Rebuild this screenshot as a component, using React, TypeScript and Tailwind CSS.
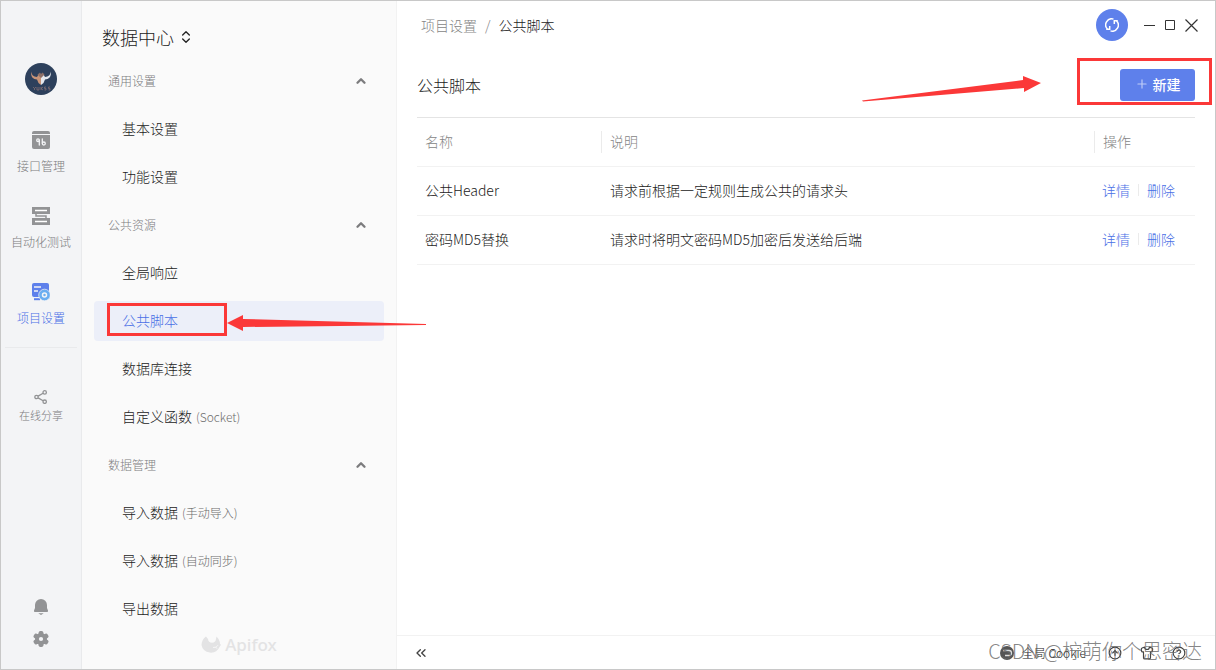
import { ChevronUp, ChevronsLeft, ChevronsUpDown, CircleHelp, CircleArrowUp, Plus, Shirt } from 'lucide-react';
import type { ReactNode } from 'react';

interface MenuItem {
  name: string;
  note?: string;
}

interface MenuGroup {
  title: string;
  items: MenuItem[];
}

const menuGroups: MenuGroup[] = [
  {
    title: '通用设置',
    items: [{ name: '基本设置' }, { name: '功能设置' }],
  },
  {
    title: '公共资源',
    items: [
      { name: '全局响应' },
      { name: '公共脚本' },
      { name: '数据库连接' },
      { name: '自定义函数', note: '(Socket)' },
    ],
  },
  {
    title: '数据管理',
    items: [
      { name: '导入数据', note: '(手动导入)' },
      { name: '导入数据', note: '(自动同步)' },
      { name: '导出数据' },
    ],
  },
];

const scripts = [
  { name: '公共Header', description: '请求前根据一定规则生成公共的请求头' },
  { name: '密码MD5替换', description: '请求时将明文密码MD5加密后发送给后端' },
];

function Avatar() {
  return (
    <svg className="w-8 h-8" viewBox="0 0 32 32">
      <circle cx="16" cy="16" r="16" fill="#2d405c" />
      <path d="M6.500 8.500c0 3.500 2 5.200 5.500 5.500l1.500-2.500 2.500 2.500v8l-2.500-2-1.500-3.500C8.500 16.500 5 13.500 6.500 8.500Z" fill="#c89478" />
      <path d="M25.500 8.500c0 3.500-2 5.200-5.500 5.500l-1.500-2.500L16 14v8l2.500-2 1.500-3.500c3.500 0 7-3 5.500-8Z" fill="#e4e8ee" />
      <path d="M12.500 11.500 15 9.500l1 1.500 1.500-1.500 2 2-3.500 3.500Z" fill="#8b6f68" />
      <path d="M8 24l1.500 1.500V27m0-1.500L11 24m1 0v3h2v-3m2 0v3m2-3-2 1.500 2 1.500m3-3h-1.500v1.500H21V27h-1.500M25 24h-1.500v1.500H25V27h-1.500" fill="none" stroke="#8d7474" strokeWidth=".7" />
    </svg>
  );
}

function ApiIcon() {
  return (
    <svg className="w-[18px] h-[18px]" viewBox="0 0 18 18">
      <path d="M2 0h14a2 2 0 0 1 2 2v1H0V2a2 2 0 0 1 2-2Z" fill="#929395" />
      <path d="M0 4h18v12a2 2 0 0 1-2 2H2a2 2 0 0 1-2-2Z" fill="#929395" />
      <g fill="none" stroke="#f3f4f6" strokeWidth="1.300" strokeLinecap="round">
        <circle cx="6" cy="9.200" r="1.300" />
        <path d="M7.300 9.200V14M10.300 8v4" />
        <circle cx="11.800" cy="12.500" r="1.500" />
      </g>
    </svg>
  );
}

function TestIcon() {
  return (
    <svg className="w-[18px] h-[18px]" viewBox="0 0 18 18">
      <path d="M0 0h18v7H0ZM0 11h18v7H0Z" fill="#929395" />
      <path d="M3 3.500h12M3 14.500h12" stroke="#fff" strokeWidth="1.300" />
      <path d="M4 7v2h10v2" fill="none" stroke="#929395" strokeWidth="1.500" />
    </svg>
  );
}

function SettingIcon() {
  return (
    <svg className="w-[18px] h-[18px]" viewBox="0 0 18 18">
      <rect width="17" height="14" rx="2" fill="#5e80eb" />
      <path d="M2 4h7M2 8h4" stroke="#f3f4f6" strokeWidth="1.300" />
      <path d="M2 16.200h6" stroke="#5e80eb" strokeWidth="2" />
      <circle cx="12.500" cy="12" r="5.800" fill="#6aaef0" stroke="#f3f4f6" strokeWidth=".7" />
      <circle cx="12.500" cy="12" r="2" fill="none" stroke="#f3f4f6" strokeWidth="1.500" />
    </svg>
  );
}

function ShareIcon() {
  return (
    <svg className="w-[14px] h-[14px]" viewBox="0 0 14 14" fill="none" stroke="#929395" strokeWidth="1.300">
      <circle cx="2.500" cy="7" r="1.700" />
      <circle cx="10.700" cy="2.400" r="1.700" />
      <circle cx="10.700" cy="11.700" r="1.700" />
      <path d="m4.100 6.100 5-2.800M4.100 7.900l5 2.900" />
    </svg>
  );
}

function BellIcon() {
  return (
    <svg className="w-4 h-4" viewBox="0 0 16 16" fill="#929395">
      <path d="M8 0a6 6 0 0 1 6 6v3l.9 2.200c.4 1-.1 1.800-1 1.800H2.100c-.9 0-1.400-.8-1-1.800L2 9V6a6 6 0 0 1 6-6ZM5.300 14.200h5.400L8 16Z" />
    </svg>
  );
}

function GearIcon() {
  return (
    <svg className="w-4 h-4" viewBox="0 0 16 16">
      <g fill="#929395">
        <circle cx="8" cy="8" r="6" />
        <rect x="5.600" y="0" width="4.800" height="16" rx="1.800" />
        <rect x="5.600" y="0" width="4.800" height="16" rx="1.800" transform="rotate(60 8 8)" />
        <rect x="5.600" y="0" width="4.800" height="16" rx="1.800" transform="rotate(120 8 8)" />
      </g>
      <circle cx="8" cy="8" r="2.100" fill="#f3f4f6" />
    </svg>
  );
}

function SyncIcon() {
  return (
    <svg className="w-[14px] h-[14px]" viewBox="0 0 14 14" fill="none" stroke="white" strokeWidth="1.500">
      <path d="M8.500 1.100A6 6 0 0 0 2.600 11.200M1.200 11.300h3.500V8" />
      <path d="M5.500 12.900A6 6 0 0 0 11.400 2.800M12.800 2.700H9.300V6" />
    </svg>
  );
}

function FoxLogo() {
  return (
    <svg className="w-5 h-5" viewBox="0 0 20 20">
      <path d="M5 1.500 7 4c.3 2.500 1.700 3.800 4 3.800S14.700 6.500 15 4l.5-2.500 2 2.500c.8 1.500 1.500 3 1.500 5l1 .8-1.500 2.200A9.500 9.500 0 0 1 .5 10C.5 6.500 2.500 3 5 1.500Z" fill="#e3e3e4" />
      <path d="m12 12.500 3-.3 2-2m-2 2 1 1.500" fill="none" stroke="#fafafa" strokeWidth=".8" />
    </svg>
  );
}

interface RailItemProps {
  label: string;
  active?: boolean;
  children: ReactNode;
}

function RailItem({ label, active, children }: RailItemProps) {
  return (
    <button className="h-[76px] w-full flex flex-col items-center gap-2 pt-2">
      {children}
      <span className={`text-[12px] leading-[18px] ${active ? 'text-[#4a6fe6]' : 'text-[#7c7c7e]'}`}>{label}</span>
    </button>
  );
}

function Rail() {
  return (
    <nav className="w-[81px] shrink-0 bg-[#f3f4f6] border-r border-[#e9eaec] flex flex-col items-center pt-[62px] pb-[22px]">
      <button aria-label="用户">
        <Avatar />
      </button>
      <div className="w-full pt-7">
        <RailItem label="接口管理">
          <ApiIcon />
        </RailItem>
        <RailItem label="自动化测试">
          <TestIcon />
        </RailItem>
        <RailItem label="项目设置" active>
          <SettingIcon />
        </RailItem>
      </div>
      <div className="w-[72px] h-px bg-[#e9eaec] -mt-1" />
      <button className="flex flex-col items-center mt-[42px]">
        <ShareIcon />
        <span className="text-[11px] leading-[22px] text-[#7c7c7e]">在线分享</span>
      </button>
      <div className="mt-auto flex flex-col gap-4">
        <button aria-label="通知">
          <BellIcon />
        </button>
        <button aria-label="设置">
          <GearIcon />
        </button>
      </div>
    </nav>
  );
}

// Red frame and arrow pointing at the active menu entry
function MenuMark() {
  return (
    <>
      <div className="absolute left-[13px] top-[2px] w-[120px] h-[33px] border-3 border-[#fb3838] pointer-events-none" />
      <svg className="absolute z-10 left-[133px] top-[14px] w-[200px] h-4 pointer-events-none" viewBox="0 0 200 16">
        <path d="M0 8 16 0v4l183 5v1L16 12v4Z" fill="#fb3838" />
      </svg>
    </>
  );
}

function Sidebar() {
  return (
    <aside className="w-[315px] shrink-0 bg-[#fafafa] border-r border-[#f2f2f2] flex flex-col px-3 pb-[14px]">
      <button className="flex items-center gap-1 pl-2 pt-4 h-14 text-[18px] leading-8 text-[#222]">
        数据中心
        <ChevronsUpDown className="w-4 h-4" strokeWidth={2} />
      </button>
      {menuGroups.map((group) => (
        <section key={group.title}>
          <button className="w-full h-12 flex items-center justify-between pl-[14px] pr-4 text-[12px] text-[#7c7c7e]">
            {group.title}
            <ChevronUp className="w-[14px] h-[14px]" strokeWidth={4} />
          </button>
          <ul>
            {group.items.map((item) => {
              const active = item.name === '公共脚本';
              return (
                <li key={item.name + (item.note ?? '')} className="h-12 py-1">
                  <div className="relative">
                    <a
                      href="#"
                      className={`h-10 pl-7 pb-0.5 rounded flex items-center gap-1 text-[14px] ${
                        active ? 'bg-[#eceff9] text-[#4a6fe6]' : 'text-[#222]'
                      }`}
                    >
                      {item.name}
                      {item.note && <span className="pt-0.5 text-[12px] text-[#6c6c6c]">{item.note}</span>}
                    </a>
                    {active && <MenuMark />}
                  </div>
                </li>
              );
            })}
          </ul>
        </section>
      ))}
      <div className="mt-auto flex items-center justify-center gap-1">
        <FoxLogo />
        <span className="font-['Noto_Sans'] font-medium text-[17px] leading-5 text-[#e3e3e4]">Apifox</span>
      </div>
    </aside>
  );
}

function TopBar() {
  return (
    <header className="h-12 flex items-center justify-between pl-6 pr-[13px]">
      <nav className="flex items-center gap-2 text-[14px] text-[#222]">
        <a href="#" className="text-[#858585]">项目设置</a>
        <span className="text-[#858585]">/</span>
        <span>公共脚本</span>
      </nav>
      <div className="flex items-center text-[#333]">
        <button aria-label="同步" className="w-8 h-8 mr-[11px] rounded-full bg-[#5e80eb] flex items-center justify-center">
          <SyncIcon />
        </button>
        <button aria-label="最小化" className="w-[21px] flex justify-center">
          <svg className="w-[11px] h-[11px]" viewBox="0 0 11 11" stroke="currentColor">
            <path d="M0 5.500h11" />
          </svg>
        </button>
        <button aria-label="最大化" className="w-[21px] flex justify-center">
          <svg className="w-[11px] h-[11px]" viewBox="0 0 11 11" fill="none" stroke="currentColor">
            <path d="M.5.500h9v9h-9Z" />
          </svg>
        </button>
        <button aria-label="关闭" className="w-[21px] flex justify-center">
          <svg className="w-[13px] h-[13px]" viewBox="0 0 13 13" stroke="currentColor" strokeWidth="1.200">
            <path d="m.5.500 12 12m0-12-12 12" />
          </svg>
        </button>
      </div>
    </header>
  );
}

function CreateButton() {
  return (
    <div className="relative">
      <button className="w-[75px] h-8 pb-0.5 rounded-[3px] bg-[#5e80eb] text-white text-[14px] font-medium flex items-center justify-center gap-1">
        <Plus className="w-[14px] h-[14px] opacity-60" strokeWidth={2} />
        新建
      </button>
      {/* Red frame and arrow */}
      <div className="absolute -left-[43px] -right-[17px] -top-[11px] -bottom-1 border-3 border-[#fb3838] pointer-events-none" />
      <svg className="absolute right-[154px] top-[7px] w-[179px] h-[26px] pointer-events-none" viewBox="0 0 179 26">
        <path d="M0 24.500 161 4V0l18 7-17 9v-4L1 25.500Z" fill="#fb3838" />
      </svg>
    </div>
  );
}

function ScriptTable() {
  return (
    <table className="w-full table-fixed border-t border-[#e4e4e4] text-[14px] leading-5 text-left">
      <thead>
        <tr className="h-[49px] border-b border-[#f2f2f2] text-[#858585]">
          <th className="w-[185px] pl-2 pb-0.5 font-light">名称</th>
          <th className="font-light">
            <div className="h-[22px] border-l border-[#ebebeb] pl-2 -ml-px leading-5">说明</div>
          </th>
          <th className="w-[101px] font-light">
            <div className="h-[22px] border-l border-[#ebebeb] pl-2 leading-5">操作</div>
          </th>
        </tr>
      </thead>
      <tbody>
        {scripts.map((script) => (
          <tr key={script.name} className="h-[49px] border-b border-[#f2f2f2] text-[#222]">
            <td className="pl-2 pb-0.5">{script.name}</td>
            <td className="pl-2 pb-0.5">{script.description}</td>
            <td className="pl-2 pb-0.5">
              <div className="flex items-center gap-2 text-[#4a6fe6]">
                <a href="#">详情</a>
                <span className="w-px h-3 bg-[#ebebeb]" />
                <a href="#">删除</a>
              </div>
            </td>
          </tr>
        ))}
      </tbody>
    </table>
  );
}

function StatusBar() {
  return (
    <footer className="relative h-[34px] border-t border-[#f2f2f2] flex items-center justify-between pl-4 pr-[29px] text-[#444]">
      <button aria-label="收起">
        <ChevronsLeft className="w-4 h-4" strokeWidth={2} />
      </button>
      <div className="flex items-center gap-[18px]">
        <button className="flex items-center gap-2 text-[12px] text-[#222] mr-1">
          <svg className="w-[14px] h-[14px]" viewBox="0 0 14 14">
            <circle cx="7" cy="7" r="7" fill="#555" />
            <path d="M3 4.500h6a2.500 2.500 0 0 1 0 5H5" fill="none" stroke="#ddd" strokeWidth="1.300" />
          </svg>
          全局 Cookie
        </button>
        <button aria-label="更新">
          <CircleArrowUp className="w-[14px] h-[14px]" />
        </button>
        <button aria-label="主题">
          <Shirt className="w-[14px] h-[14px]" />
        </button>
        <button aria-label="帮助">
          <CircleHelp className="w-[14px] h-[14px]" />
        </button>
      </div>
      <p className="absolute right-[13px] bottom-1 text-[20px] leading-7 text-[#666]/80 whitespace-nowrap pointer-events-none">
        CSDN @柠萌你个思密达
      </p>
    </footer>
  );
}

export default function App() {
  return (
    <div className="flex min-h-screen w-full bg-white border border-[#c8c8c8] font-light font-['Noto_Sans_CJK_SC',sans-serif]">
      <Rail />
      <Sidebar />
      <main className="flex-1 min-w-0 flex flex-col">
        <TopBar />
        <div className="flex-1 px-5">
          <div className="h-[68px] pt-5 flex items-start justify-between">
            <h1 className="text-[16px] leading-8 text-[#222]">公共脚本</h1>
            <CreateButton />
          </div>
          <ScriptTable />
        </div>
        <StatusBar />
      </main>
    </div>
  );
}
